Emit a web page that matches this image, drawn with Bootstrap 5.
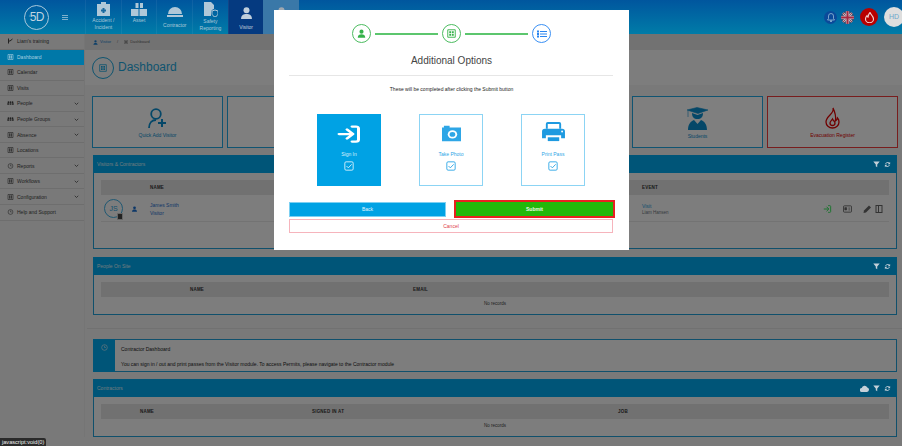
<!DOCTYPE html>
<html lang="en">
<head>
<meta charset="UTF-8">
<meta name="viewport" content="width=device-width, initial-scale=1.0">
<title>Visitor Dashboard</title>
<link href="https://cdn.jsdelivr.net/npm/bootstrap@5.3.0/dist/css/bootstrap.min.css" rel="stylesheet">
<style>
    html, body { background: #fff; overflow: hidden; }
    body { font-family: "Liberation Sans", Arial, sans-serif; font-size: 5px; line-height: 1.2; color: #333; }
    svg { display: block; flex: none; }
    .shell { width: 902px; height: 446px; position: relative; overflow: hidden; background: #f2f2f2; }

    /* top bar: sits over the backdrop, so its colours are the dimmed ones */
    .topbar { height: 34px; position: relative; z-index: 1051; background: linear-gradient(#00569e, #007ca8); color: #a9c9d8; }
    .brand { width: 85px; padding-left: 24px; gap: 13px; }
    .brand-ring { width: 25px; height: 25px; border: 1px solid #a8c8dc; border-radius: 50%; font-size: 12px; letter-spacing: -.5px; color: #c0d4e0; }
    .brand-ring small { font-size: 3px; letter-spacing: 0; }
    .burger { width: 6px; height: 5px; border-top: 1px solid #7fb0cc; border-bottom: 1px solid #7fb0cc; position: relative; }
    .burger::after { content: ""; position: absolute; left: 0; right: 0; top: 1px; border-top: 1px solid #7fb0cc; }
    .modtab { width: 35.7px; height: 34px; border-left: 1px solid rgba(255,255,255,.06); font-size: 5px; text-align: center; line-height: 7px; padding-top: 2px; }
    .modtab svg { margin-bottom: 1px; }
    .modtab-active { background: #053a80; color: #c0cfdc; }
    .modtab-hover { background: #3a78a8; }
    .top-tools { gap: 6px; margin-right: -2px; }
    .tool-bell { width: 13px; height: 13px; border-radius: 50%; background: #0a4a9a; margin-right: -2px; }
    .tool-flag { width: 13px; height: 13px; border-radius: 50%; overflow: hidden; }
    .tool-fire { width: 18px; height: 18px; border-radius: 50%; background: #b80000; }
    .tool-user { width: 20px; height: 20px; border-radius: 50%; background: #dedede; color: #6ea8cc; font-size: 7px; }

    /* sidebar */
    .sidenav { width: 85px; flex: none; border-right: 1px solid #eaeaea; }
    .side-row { height: 15.55px; padding: 0 5px 0 7px; gap: 3px; border-bottom: 1px solid #dcdcdc; color: #444; font-size: 5px; }
    .side-row svg:first-child { width: 7px; }
    .side-row.is-active { position: relative; z-index: 1051; background: #0078a8; color: #a8d0e0; border-bottom-color: #0078a8; }
    .side-chev { margin-left: auto; }

    /* main */
    .crumbs { height: 16px; background: #e4e4e4; padding-left: 8px; gap: 2px; color: #666; font-size: 4px; }
    .crumbs a { color: #1b7fd0; text-decoration: none; }
    .title-band { height: 35px; background: #fafafa; padding-left: 7px; gap: 4px; color: #1ea9e0; font-size: 12px; }
    .title-ring { width: 22px; height: 22px; border: 1px solid #1ea9e0; border-radius: 50%; }
    .tile-row { padding: 11px 4px 0 7px; gap: 4px; }
    .dash-tile { flex: 1 1 0; height: 52px; background: #fff; border: 1px solid #21a9e4; color: #0b8fd0; font-size: 5px; gap: 3px; padding-top: 1px; }
    .dash-tile.is-danger { border-color: #f03a3a; color: #e00000; }

    .data-panel { margin: 8px 5px 0 8px; height: 58px; border: 1px solid #21a0d8; background: #fbfbfb; }
    .panel-tall { margin-top: 7px; height: 94px; }
    .panel-head { height: 18px; background: #00aaf0; color: #dff3fc; padding: 0 6px 0 4px; gap: 4px; font-size: 5px; margin: -1px -1px 0; }
    .panel-head svg { position: relative; z-index: 1051; color: #c4d0d8; }
    .panel-body { padding: 7px 7px 0; }
    .grid-table { table-layout: fixed; margin: 0; font-size: 4.5px; width: 100%; }
    .grid-table th { background: #e2e2e2; height: 15px; padding: 0; vertical-align: middle; font-weight: 700; color: #333; border: 0; letter-spacing: .2px; }
    .grid-table td { padding: 0; border: 0; background: transparent; color: #444; }
    .no-records { height: 14px; text-align: center; vertical-align: middle; color: #555; }
    .grid-table .visit-row td { height: 26px; padding-top: 2px; border-bottom: 1px solid #e6e6e6; vertical-align: middle; }
    .w-49 { width: 49px; } .w-89 { width: 89px; } .w-223 { width: 223px; } .w-39 { width: 39px; } .w-172 { width: 172px; } .w-306 { width: 306px; }
    .w-492 { width: 492px; } .w-120 { width: 120px; }
    .visitor-link { color: #1b6fd0; font-size: 5px; line-height: 8px; }
    .visit-link { color: #1ea0dc; font-size: 5px; line-height: 8px; }
    .avatar-ring { width: 19px; height: 19px; border-radius: 50%; border: 1px solid #3fb0e4; color: #2a9fd8; font-size: 7px; margin-left: 3px; position: relative; }
    .avatar-tag { position: absolute; right: -1px; bottom: -3px; width: 6px; height: 7px; background: #444; border: 1px solid #ccc; border-radius: 1px; }
    .row-tools { gap: 3px; padding-right: 6px; }
    .section-rule { margin: 13px 0 0 2px; border-top: 1px solid #e2e2e2; height: 0; }
    .info-strip { margin: 10px 5px 0 8px; height: 33px; border: 1px solid #21a0d8; background: #fbfbfb; color: #222; font-size: 5px; }
    .info-side { width: 22px; flex: none; background: #00aaf0; margin: -1px 0 -1px -1px; padding-top: 5px; }
    .info-text { padding: 6px 0 0 6px; }
    .info-text p { margin: 0 0 9px; font-size: 5px; line-height: 6px; }
    .panel-last { margin-top: 7px; }

    .url-tip { position: absolute; left: 0; bottom: 0; height: 8px; z-index: 1060; background: #2a2a2a; color: #eee; font-size: 5.6px; line-height: 8px; padding: 0 2px; border-radius: 0 2px 0 0; }

    /* wizard modal */
    .shell .modal-backdrop { position: absolute; width: 100%; height: 100%; }
    .wizard { position: absolute; left: 274px; top: 10px; width: 355px; height: 240px; z-index: 1055; background: #fff; padding: 14px 15px 0; border: 0; border-radius: 0; color: #333; }
    .step-dot { width: 19px; height: 19px; border-radius: 50%; border: 1.5px solid #4cbc60; flex: none; }
    .step-dot.is-current { border-color: #3a90f4; }
    .step-line { width: 63px; height: 2px; background: #5cc66e; margin: 0 4px; }
    .wizard-title { font-size: 10px; font-weight: 400; text-align: center; margin: 11px 0 0; line-height: 14px; color: #444; }
    .wizard-rule { border-top: 1px solid #e6e6e6; margin: 7px 1px 0 0; height: 0; }
    .wizard-note { font-size: 5px; text-align: center; margin: 10px 0 0; line-height: 6px; color: #222; }
    .choice-row { margin-top: 22px; padding-left: 28px; gap: 38px; }
    .choice-tile { width: 64px; height: 72px; border: 1px solid #8cd4f4; color: #2ea6e6; font-size: 5px; padding-top: 10px; }
    .choice-tile.is-on { background: #00a2e4; border-color: #00a2e4; color: #d8f0fb; }
    .choice-label { margin: 8px 0 4px; line-height: 6px; }
    .print-ico { margin-top: -3px; }
    .wizard-actions { margin-top: 14px; gap: 8px; align-items: center; margin-right: -1px; }
    .wizard .btn { font-size: 5px; line-height: 6px; padding: 0; border-radius: 0; }
    .btn-back { width: 157px; height: 15px; background: #00a2e4; border: 1px solid #7dd0f2; color: #e6f6fd; }
    .btn-submit { width: 161px; height: 18px; background: #22b80a; border: 2px solid #e82020; color: #eafbe4; font-weight: 700; }
    .btn-cancel { display: block; width: 324px; height: 14px; background: #fff; border: 1px solid #f6b4bc; color: #e0404a; margin-top: 1px; }
</style>
</head>
<body>
<svg width="0" height="0" class="position-absolute">
    <symbol id="i-user" viewBox="0 0 24 24"><circle cx="12" cy="7" r="5.5" fill="currentColor"/><path d="M2 23c0-7 4.500-9 10-9s10 2 10 9z" fill="currentColor"/></symbol>
    <symbol id="i-filter" viewBox="0 0 24 24"><path d="M1 2h22l-8.500 10v9l-5-3v-6z" fill="currentColor"/></symbol>
    <symbol id="i-sync" viewBox="0 0 24 24"><path d="M4 10a8.500 8.500 0 0 1 14-4l3-3v8h-8l3-3a5.500 5.500 0 0 0-9 2zM20 14a8.500 8.500 0 0 1-14 4l-3 3v-8h8l-3 3a5.500 5.500 0 0 0 9-2z" fill="currentColor"/></symbol>
    <symbol id="i-chev" viewBox="0 0 10 10"><path d="M1.500 3.500 5 7l3.500-3.500" fill="none" stroke="currentColor" stroke-width="1.500"/></symbol>
    <symbol id="i-grid" viewBox="0 0 12 12"><path d="M1 1h10v10H1z" fill="none" stroke="currentColor" stroke-width="1.200"/><path d="M3 3h2.500v2.500H3zM6.500 3H9v2.500H6.500zM3 6.500h2.500V9H3zM6.500 6.500H9V9H6.500z" fill="currentColor"/></symbol>
    <symbol id="i-people" viewBox="0 0 24 14"><circle cx="5" cy="4" r="3" fill="currentColor"/><circle cx="12" cy="4" r="3" fill="currentColor"/><circle cx="19" cy="4" r="3" fill="currentColor"/><path d="M1 8h6v5H1zM9 8h6v5H9zM17 8h6v5h-6z" fill="currentColor"/></symbol>
    <symbol id="i-clock" viewBox="0 0 12 12"><circle cx="6" cy="6" r="4.800" fill="none" stroke="currentColor" stroke-width="1.100"/><path d="M6 3v3h2.500" fill="none" stroke="currentColor"/></symbol>
    <symbol id="i-signin" viewBox="0 0 24 24"><path d="M2 12h13M10 6l6 6-6 6" fill="none" stroke="currentColor" stroke-width="3" stroke-linecap="round" stroke-linejoin="round"/><path d="M15 2h4a2.500 2.500 0 0 1 2.500 2.500v15A2.500 2.500 0 0 1 19 22h-4" fill="none" stroke="currentColor" stroke-width="3" stroke-linecap="round"/></symbol>
    <symbol id="i-check" viewBox="0 0 12 12"><rect x="1" y="1" width="10" height="10" rx="1.500" fill="none" stroke="currentColor" stroke-width="1.100"/><path d="M3 6l2.200 2.200L9.200 4" fill="none" stroke="currentColor" stroke-width="1.100"/></symbol>
</svg>

<div class="shell">
    <div class="topbar d-flex">
        <div class="brand d-flex align-items-center">
            <div class="brand-ring d-flex align-items-center justify-content-center"><small>i</small>5D</div>
            <div class="burger"></div>
        </div>
        <div class="modtab">
            <svg class="mx-auto" width="15" height="14" viewBox="0 0 15 14"><path d="M5 2V0h5v2M1 2h13v12H1z" fill="#b0c8d8"/><path d="M6.500 6h2v1.500H10v2H8.500V11h-2V9.500H5v-2h1.500z" fill="#1a6aa0"/></svg>
            Accident /<br>Incident
        </div>
        <div class="modtab">
            <svg class="mx-auto" width="16" height="14" viewBox="0 0 16 14"><path d="M4.500 1h3v5h-3zM9 1h3v5H9zM0 7h7.500v7H0zM8.500 7H16v7H8.500z" fill="#b0c8d8"/></svg>
            Asset
        </div>
        <div class="modtab">
            <svg class="mx-auto mt-1" width="16" height="11" viewBox="0 0 16 11"><path d="M1 8a7 7 0 0 1 14 0zM0 9h16v2H0z" fill="#b0c8d8"/></svg>
            <span class="d-block pt-1">Contractor</span>
        </div>
        <div class="modtab">
            <svg class="mx-auto" width="15" height="15" viewBox="0 0 15 15"><path d="M1 0h7l3 3v4a4 4 0 0 0-3 4v3H1z" fill="#b0c8d8"/><path d="M12 8l3 1v2.500c0 1.500-1.500 3-3 3.500-1.500-.5-3-2-3-3.500V9z" fill="none" stroke="#b0c8d8"/></svg>
            Safety<br>Reporting
        </div>
        <div class="modtab modtab-active">
            <svg class="mx-auto mt-1 mb-1" width="13" height="14"><use href="#i-user"/></svg>
            Visitor
        </div>
        <div class="modtab modtab-hover border-0">
            <svg class="mx-auto mt-1" width="13" height="14" style="color:#a0a8b0"><use href="#i-user"/></svg>
        </div>
        <div class="top-tools d-flex align-items-center ms-auto">
            <div class="tool-bell d-flex align-items-center justify-content-center">
                <svg width="8" height="9" viewBox="0 0 8 9"><path d="M4 .5a2.500 2.500 0 0 1 2.500 2.500v2.500L7.500 7h-7l1-1.500V3A2.500 2.500 0 0 1 4 .5zM3 7.800h2L4 9z" fill="none" stroke="#a8c8e0" stroke-width=".7"/></svg>
            </div>
            <div class="tool-flag">
                <svg width="13" height="13" viewBox="0 0 13 13"><path fill="#2a3050" d="M0 0h13v13H0z"/><path d="M0 0l13 13M13 0 0 13" stroke="#b8b8c0" stroke-width="2.400"/><path d="M0 0l13 13M13 0 0 13" stroke="#a03040" stroke-width=".9"/><path d="M6.500 0v13M0 6.500h13" stroke="#c0c0c8" stroke-width="3.600"/><path d="M6.500 0v13M0 6.500h13" stroke="#a82840" stroke-width="2"/></svg>
            </div>
            <div class="tool-fire d-flex align-items-center justify-content-center">
                <svg width="9" height="11" viewBox="0 0 9 11"><path d="M5 .5c.5 2 3.500 3.500 3.500 6.500a4 3.800 0 0 1-8 0c0-1.500.8-2.500 1.500-3.300.2.800.5 1.200 1 1.500C3.300 3.300 4 1.500 5 .5z" fill="none" stroke="#f0d0d0" stroke-width="1.100"/></svg>
            </div>
            <div class="tool-user d-flex align-items-center justify-content-center">HD</div>
        </div>
    </div>

    <div class="d-flex">
        <nav class="sidenav">
            <div class="side-row d-flex align-items-center"><svg width="6" height="6" viewBox="0 0 12 12"><path d="M2 1v10M2 6h3l5-4M5 6" fill="none" stroke="currentColor" stroke-width="2"/></svg>Liam's training</div>
            <div class="side-row is-active d-flex align-items-center"><svg width="6" height="6"><use href="#i-grid"/></svg>Dashboard</div>
            <div class="side-row d-flex align-items-center"><svg width="6" height="6"><use href="#i-grid"/></svg>Calendar</div>
            <div class="side-row d-flex align-items-center"><svg width="6" height="6"><use href="#i-grid"/></svg>Visits</div>
            <div class="side-row d-flex align-items-center"><svg width="7" height="6"><use href="#i-people"/></svg>People<svg class="side-chev" width="5" height="5"><use href="#i-chev"/></svg></div>
            <div class="side-row d-flex align-items-center"><svg width="7" height="6"><use href="#i-people"/></svg>People Groups<svg class="side-chev" width="5" height="5"><use href="#i-chev"/></svg></div>
            <div class="side-row d-flex align-items-center"><svg width="6" height="6"><use href="#i-grid"/></svg>Absence<svg class="side-chev" width="5" height="5"><use href="#i-chev"/></svg></div>
            <div class="side-row d-flex align-items-center"><svg width="6" height="6"><use href="#i-grid"/></svg>Locations</div>
            <div class="side-row d-flex align-items-center"><svg width="6" height="6"><use href="#i-clock"/></svg>Reports<svg class="side-chev" width="5" height="5"><use href="#i-chev"/></svg></div>
            <div class="side-row d-flex align-items-center"><svg width="7" height="6"><use href="#i-grid"/></svg>Workflows<svg class="side-chev" width="5" height="5"><use href="#i-chev"/></svg></div>
            <div class="side-row d-flex align-items-center"><svg width="6" height="6"><use href="#i-grid"/></svg>Configuration<svg class="side-chev" width="5" height="5"><use href="#i-chev"/></svg></div>
            <div class="side-row d-flex align-items-center"><svg width="6" height="6"><use href="#i-clock"/></svg>Help and Support</div>
        </nav>

        <main class="flex-grow-1">
            <div class="crumbs d-flex align-items-center">
                <svg width="5" height="5" style="color:#1b7fd0"><use href="#i-user"/></svg><a href="#">Visitor</a><span class="px-1">/</span>
                <svg width="4" height="4"><use href="#i-grid"/></svg><span>Dashboard</span>
            </div>
            <div class="title-band d-flex align-items-center">
                <div class="title-ring d-flex align-items-center justify-content-center"><svg width="8" height="8"><use href="#i-grid"/></svg></div>
                Dashboard
            </div>

            <div class="tile-row d-flex">
                <div class="dash-tile d-flex flex-column align-items-center justify-content-center">
                    <svg width="20" height="21" viewBox="0 0 20 21"><circle cx="8" cy="6" r="4.800" fill="none" stroke="currentColor" stroke-width="1.800"/><path d="M1 20c0-5 3-8 7-8" fill="none" stroke="currentColor" stroke-width="1.800"/><path d="M14 11v8M10 15h8" stroke="currentColor" stroke-width="2"/></svg>
                    Quick Add Visitor
                </div>
                <div class="dash-tile"></div>
                <div class="dash-tile"></div>
                <div class="dash-tile"></div>
                <div class="dash-tile d-flex flex-column align-items-center justify-content-center">
                    <svg width="21" height="23" viewBox="0 0 21 23"><path d="M0 3l10-2.500L21 3l-10 3.500zM1 4v6" fill="currentColor" stroke="currentColor" stroke-width=".6"/><path d="M5 6c0 4 2 6 5.500 6S16 10 16 6l-5.500 2zM1 23c0-6 3-9 6-10l3.500 4 3.500-4c3 1 6 4 6 10z" fill="currentColor"/></svg>
                    Students
                </div>
                <div class="dash-tile is-danger d-flex flex-column align-items-center justify-content-center">
                    <svg width="15" height="22" viewBox="0 0 15 22"><path d="M8 1c1 3-1 5-3 7C3 10 1 12 1 15a6.500 6 0 0 0 13 0c0-1.500-.5-3-1.500-4-.2 1.500-1 2.500-2 3 .5-4-.5-9-2.500-13zM7.500 12c.5 1.500 2.500 2.500 2.500 4a2.500 2.500 0 0 1-5 0c0-1.500 1.500-2.500 2.500-4z" fill="none" stroke="currentColor" stroke-width="1.300"/></svg>
                    Evacuation Register
                </div>
            </div>

            <section class="data-panel panel-tall">
                <div class="panel-head d-flex align-items-center">
                    <span class="me-auto">Visitors &amp; Contractors</span>
                    <svg width="7" height="7"><use href="#i-filter"/></svg><svg width="7" height="7"><use href="#i-sync"/></svg>
                </div>
                <div class="panel-body">
                    <table class="table grid-table">
                        <colgroup><col class="w-49"><col class="w-492"><col class="w-120"><col></colgroup>
                        <thead><tr><th></th><th>NAME</th><th>EVENT</th><th></th></tr></thead>
                        <tbody>
                            <tr class="visit-row">
                                <td>
                                    <div class="d-flex align-items-center gap-2">
                                        <div class="avatar-ring d-flex align-items-center justify-content-center">JS<span class="avatar-tag"></span></div>
                                        <svg width="7" height="6" style="color:#1b6fd0"><use href="#i-user"/></svg>
                                    </div>
                                </td>
                                <td><div class="visitor-link">James Smith</div><div class="visitor-link">Visitor</div></td>
                                <td><div class="visit-link">Visit</div><div class="text-secondary">Liam Hansen</div></td>
                                <td>
                                    <div class="row-tools d-flex justify-content-end align-items-center">
                                        <svg class="me-2" width="9" height="8" style="color:#3ce860"><use href="#i-signin"/></svg>
                                        <svg class="me-2" width="9" height="8" viewBox="0 0 10 8"><rect x=".5" y=".5" width="9" height="7" rx="1" fill="none" stroke="#666"/><path d="M2 2.500h2V5H2zM6 3h2M6 5h2" stroke="#666" fill="#666" stroke-width=".8"/></svg>
                                        <svg width="9" height="8" viewBox="0 0 8 8"><path d="M0 8l.5-2.500L5.500.5l2 2-5 5z" fill="#666"/></svg>
                                        <svg width="8" height="8" viewBox="0 0 7 8"><rect x=".5" y=".5" width="6" height="7" fill="none" stroke="#666"/><path d="M3 .5v7" stroke="#666"/></svg>
                                    </div>
                                </td>
                            </tr>
                        </tbody>
                    </table>
                </div>
            </section>

            <section class="data-panel">
                <div class="panel-head d-flex align-items-center">
                    <span class="me-auto">People On Site</span>
                    <svg width="7" height="7"><use href="#i-filter"/></svg><svg width="7" height="7"><use href="#i-sync"/></svg>
                </div>
                <div class="panel-body">
                    <table class="table grid-table">
                        <colgroup><col class="w-89"><col class="w-223"><col></colgroup>
                        <thead><tr><th></th><th>NAME</th><th>EMAIL</th></tr></thead>
                        <tbody><tr><td class="no-records" colspan="3">No records</td></tr></tbody>
                    </table>
                </div>
            </section>

            <div class="section-rule"></div>

            <div class="info-strip d-flex">
                <div class="info-side d-flex justify-content-center">
                    <svg width="7" height="7" style="color:#dff3fc"><use href="#i-clock"/></svg>
                </div>
                <div class="info-text">
                    <p>Contractor Dashboard</p>
                    <p>You can sign in / out and print passes from the Visitor module. To access Permits, please navigate to the Contractor module</p>
                </div>
            </div>

            <section class="data-panel panel-last">
                <div class="panel-head d-flex align-items-center">
                    <span class="me-auto">Contractors</span>
                    <svg width="9" height="7" viewBox="0 0 9 7"><path d="M2 7a2 2 0 0 1-.3-4A3 3 0 0 1 7.300 2.500 2.300 2.300 0 0 1 7 7z" fill="currentColor"/></svg>
                    <svg width="7" height="7"><use href="#i-filter"/></svg><svg width="7" height="7"><use href="#i-sync"/></svg>
                </div>
                <div class="panel-body">
                    <table class="table grid-table">
                        <colgroup><col class="w-39"><col class="w-172"><col class="w-306"><col></colgroup>
                        <thead><tr><th></th><th>NAME</th><th>SIGNED IN AT</th><th>JOB</th></tr></thead>
                        <tbody><tr><td class="no-records" colspan="4">No records</td></tr></tbody>
                    </table>
                </div>
            </section>
        </main>
    </div>

    <div class="modal-backdrop show"></div>
    <div class="url-tip">javascript:void(0)</div>

    <div class="wizard modal-content">
        <div class="d-flex align-items-center justify-content-center">
            <div class="step-dot d-flex align-items-center justify-content-center">
                <svg width="9" height="9" style="color:#35b24a"><use href="#i-user"/></svg>
            </div>
            <div class="step-line"></div>
            <div class="step-dot d-flex align-items-center justify-content-center">
                <svg width="9" height="9" viewBox="0 0 12 12" style="color:#35b24a"><use href="#i-grid"/></svg>
            </div>
            <div class="step-line"></div>
            <div class="step-dot is-current d-flex align-items-center justify-content-center">
                <svg width="10" height="8" viewBox="0 0 10 8"><path d="M0 .5h2v2H0zM0 3h2v2H0zM0 5.500h2v2H0zM3 1h7v1H3zM3 3.500h7v1H3zM3 6h7v1H3z" fill="#2a85f0"/></svg>
            </div>
        </div>
        <h5 class="wizard-title">Additional Options</h5>
        <div class="wizard-rule"></div>
        <p class="wizard-note">These will be completed after clicking the Submit button</p>

        <div class="choice-row d-flex">
            <div class="choice-tile is-on d-flex flex-column align-items-center">
                <svg width="24" height="18" viewBox="0 0 24 24" preserveAspectRatio="none" class="text-white"><use href="#i-signin"/></svg>
                <div class="choice-label">Sign In</div>
                <svg width="10" height="10"><use href="#i-check"/></svg>
            </div>
            <div class="choice-tile d-flex flex-column align-items-center">
                <svg width="19" height="18" viewBox="0 0 20 22" preserveAspectRatio="none"><path d="M2 3V1h6v2h12v17H0V3z" fill="#2ea6e6"/><circle cx="11" cy="11.500" r="5" fill="#fff"/><circle cx="11" cy="11.500" r="3" fill="#2ea6e6"/></svg>
                <div class="choice-label">Take Photo</div>
                <svg width="10" height="10"><use href="#i-check"/></svg>
            </div>
            <div class="choice-tile d-flex flex-column align-items-center">
                <svg class="print-ico" width="23" height="21" viewBox="0 0 24 22"><path d="M4 7V2a2 2 0 0 1 2-2h12a2 2 0 0 1 2 2v5h-2V2H6v5z" fill="#1e9ae0"/><path d="M0 10a3 3 0 0 1 3-3h18a3 3 0 0 1 3 3v7h-4v-3H4v3H0z" fill="#1e9ae0"/><path d="M6 16h12v4H6z" fill="#1e9ae0"/><circle cx="21" cy="10" r="1" fill="#fff"/></svg>
                <div class="choice-label">Print Pass</div>
                <svg width="10" height="10"><use href="#i-check"/></svg>
            </div>
        </div>

        <div class="wizard-actions d-flex">
            <button class="btn btn-back" type="button">Back</button>
            <button class="btn btn-submit" type="button">Submit</button>
        </div>
        <button class="btn btn-cancel" type="button">Cancel</button>
    </div>
</div>

<script src="https://cdn.jsdelivr.net/npm/bootstrap@5.3.0/dist/js/bootstrap.bundle.min.js"></script>
</body>
</html>
